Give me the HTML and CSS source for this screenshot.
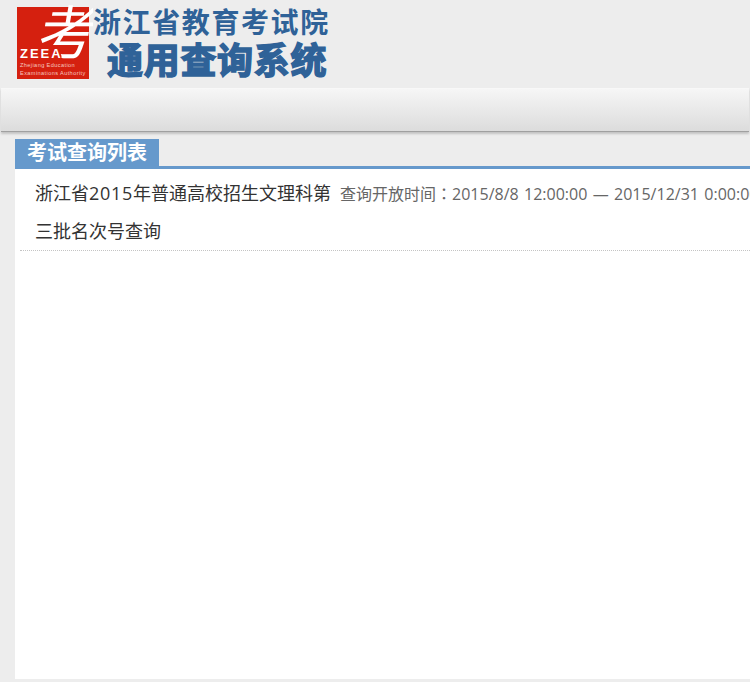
FILE: index.html
```html
<!DOCTYPE html>
<html lang="zh-CN">
<head>
  <meta charset="UTF-8" />
  <meta name="viewport" content="width=device-width, initial-scale=1.0" />
  <title>通用查询系统</title>
  <link rel="stylesheet" href="styles.css">
</head>
<body>
  <header class="header">
    <svg class="logo" width="78" height="80" viewBox="0 0 78 80">
      <rect x="2" y="7" width="72" height="72" fill="#d5200f"></rect>
      <text class="logo-char" transform="translate(21 54) skewX(-10)">考</text>
      <text class="logo-name" x="5" y="58">ZEEA</text>
      <text class="logo-small" x="5" y="67">Zhejiang Education</text>
      <text class="logo-small" x="5" y="75">Examinations Authority</text>
    </svg>
    <div class="brand">
      <div class="brand-org">浙江省教育考试院</div>
      <div class="brand-sys">通用查询系统</div>
    </div>
  </header>

  <div class="toolbar"></div>

  <main class="content">
    <div class="tab-head">
      <h2 class="tab-title">考试查询列表</h2>
    </div>
    <div class="list">
      <div class="list-item">
        <a class="item-name">浙江省<span class="year">2015</span>年普通高校招生文理科第三批名次号查询</a>
        <span class="item-time">查询开放时间<span class="colon" lang="zh-TW">：</span>2015/8/8 12:00:00 — 2015/12/31 0:00:00</span>
      </div>
    </div>
  </main>
</body>
</html>
```
FILE: styles.css
```css
html, body {
  height: 100%;
}

body {
  margin: 0;
  background-color: #ededed;
  font-family: "Open Sans", "Noto Sans CJK SC", sans-serif;
  color: #333;
  overflow: hidden;
}

.header {
  display: flex;
  height: 88px;
  padding-left: 15px;
  box-sizing: border-box;
}

.logo {
  flex: none;
  display: block;
}

.logo-char {
  font-size: 58px;
  fill: #fff;
}

.logo-name {
  font-family: "Liberation Sans", sans-serif;
  font-size: 13px;
  font-weight: 700;
  letter-spacing: 2px;
  fill: #fff;
}

.logo-small {
  font-family: "Liberation Sans", sans-serif;
  font-size: 5.6px;
  letter-spacing: 0.4px;
  fill: #f5c9c0;
}

.brand {
  color: #2f6298;
  white-space: nowrap;
}

.brand-org {
  margin-top: 2px;
  height: 38px;
  font-size: 28px;
  line-height: 40px;
  font-weight: 700;
  letter-spacing: 1.6px;
}

.brand-sys {
  margin-left: 14px;
  font-size: 36px;
  line-height: 42px;
  font-weight: 700;
  letter-spacing: 0.7px;
  -webkit-text-stroke: 1.5px #2f6298;
}

.toolbar {
  height: 44px;
  margin: 0 1px;
  background: linear-gradient(#f6f6f6, #dcdcdc);
  border-top: 1px solid #f8f8f8;
  border-bottom: 1px solid #a0a0a0;
  box-sizing: border-box;
  box-shadow: 0 2px 2px #c4c4c4;
}

.content {
  margin: 7px 0 0 15px;
  height: 540px;
  background-color: #fff;
}

.tab-head {
  height: 27px;
  background-color: #ededed;
  border-bottom: 3px solid #6699cc;
}

.tab-title {
  width: 144px;
  height: 27px;
  margin: 0;
  background-color: #6699cc;
  color: #fff;
  font-size: 20px;
  line-height: 28px;
  font-weight: 700;
  text-align: center;
}

.list {
  padding-left: 5px;
}

.list-item {
  display: flex;
  align-items: flex-start;
  height: 82px;
  padding: 5px 0 0 15px;
  box-sizing: border-box;
  border-bottom: 1px dotted #c4c4c4;
}

.item-name {
  flex: none;
  width: 305px;
  font-size: 18px;
  line-height: 38px;
  color: #333;
}

.year {
  letter-spacing: 0.7px;
}

.item-time {
  flex: none;
  font-size: 16px;
  line-height: 38px;
  color: #666;
  white-space: nowrap;
  word-spacing: 1.2px;
}

/* TC form of the full-width colon sits centred */
.colon {
  font-family: "Noto Sans CJK TC", sans-serif;
}
```
